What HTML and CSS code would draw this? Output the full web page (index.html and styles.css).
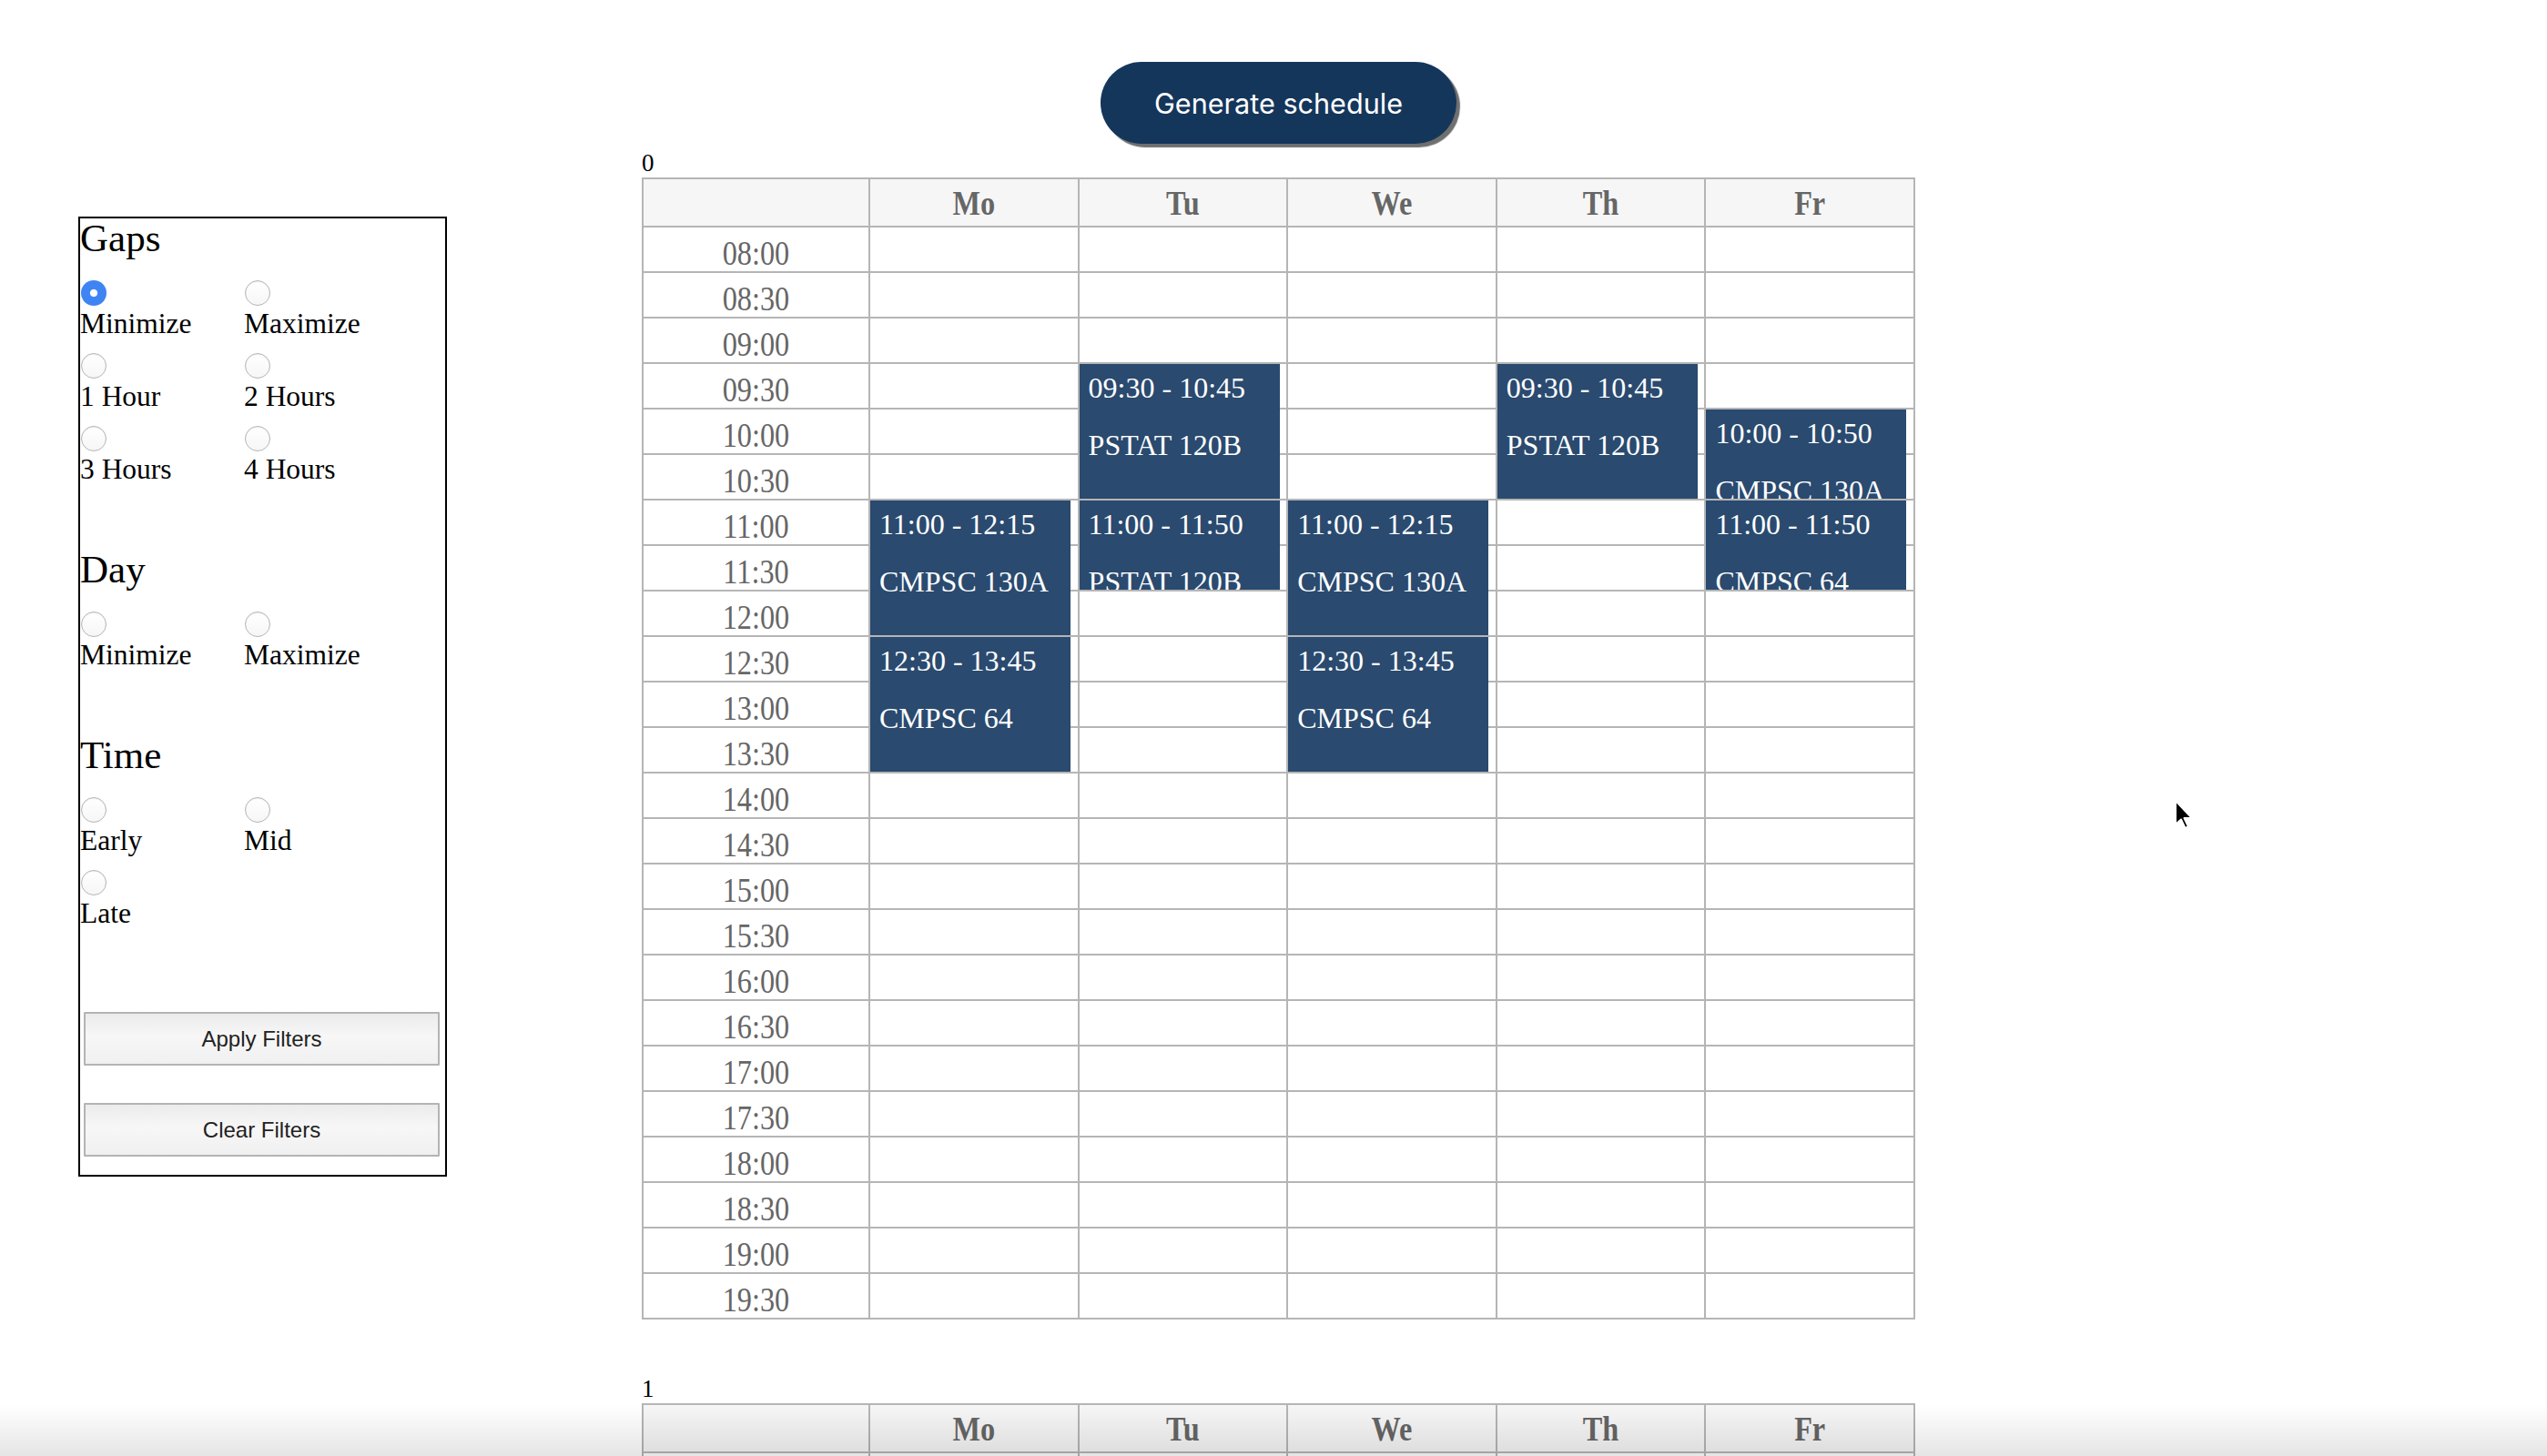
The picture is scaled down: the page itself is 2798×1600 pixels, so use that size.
FILE: index.html
```html
<!DOCTYPE html>
<html lang="en">
<head>
<meta charset="utf-8">
<title>Schedule Generator</title>
<link rel="stylesheet" href="styles.css">
</head>
<body>
<div class="page">
  <aside class="filters">
    <section class="group">
      <h3 class="group-title">Gaps</h3>
      <div class="options">
        <label class="opt"><input type="radio" name="gaps" checked><span>Minimize</span></label>
        <label class="opt"><input type="radio" name="gaps"><span>Maximize</span></label>
        <label class="opt"><input type="radio" name="gaps"><span>1 Hour</span></label>
        <label class="opt"><input type="radio" name="gaps"><span>2 Hours</span></label>
        <label class="opt"><input type="radio" name="gaps"><span>3 Hours</span></label>
        <label class="opt"><input type="radio" name="gaps"><span>4 Hours</span></label>
      </div>
    </section>
    <section class="group">
      <h3 class="group-title">Day</h3>
      <div class="options">
        <label class="opt"><input type="radio" name="day"><span>Minimize</span></label>
        <label class="opt"><input type="radio" name="day"><span>Maximize</span></label>
      </div>
    </section>
    <section class="group">
      <h3 class="group-title">Time</h3>
      <div class="options">
        <label class="opt"><input type="radio" name="time"><span>Early</span></label>
        <label class="opt"><input type="radio" name="time"><span>Mid</span></label>
        <label class="opt"><input type="radio" name="time"><span>Late</span></label>
      </div>
    </section>
    <div class="actions">
      <button class="filter-btn" type="button">Apply Filters</button>
      <button class="filter-btn" type="button">Clear Filters</button>
    </div>
  </aside>

  <main class="main">
    <div class="gen-wrap"><button class="gen-btn" type="button">Generate schedule</button></div>

    <div class="schedule">
      <div class="sched-index">0</div>
      <table class="grid">
        <colgroup><col class="time-col"><col><col><col><col><col></colgroup>
        <thead>
          <tr><th></th><th><span class="lbl">Mo</span></th><th><span class="lbl">Tu</span></th><th><span class="lbl">We</span></th><th><span class="lbl">Th</span></th><th><span class="lbl">Fr</span></th></tr>
        </thead>
        <tbody>
          <tr><td class="time"><span class="lbl">08:00</span></td><td class="slot"></td><td class="slot"></td><td class="slot"></td><td class="slot"></td><td class="slot"></td></tr>
          <tr><td class="time"><span class="lbl">08:30</span></td><td class="slot"></td><td class="slot"></td><td class="slot"></td><td class="slot"></td><td class="slot"></td></tr>
          <tr><td class="time"><span class="lbl">09:00</span></td><td class="slot"></td><td class="slot"></td><td class="slot"></td><td class="slot"></td><td class="slot"></td></tr>
          <tr><td class="time"><span class="lbl">09:30</span></td><td class="slot"></td>
            <td class="slot"><div class="ev" style="height:148px"><div class="ev-time">09:30 - 10:45</div><div class="ev-name">PSTAT 120B</div></div></td>
            <td class="slot"></td>
            <td class="slot"><div class="ev" style="height:148px"><div class="ev-time">09:30 - 10:45</div><div class="ev-name">PSTAT 120B</div></div></td>
            <td class="slot"></td></tr>
          <tr><td class="time"><span class="lbl">10:00</span></td><td class="slot"></td><td class="slot"></td><td class="slot"></td><td class="slot"></td>
            <td class="slot"><div class="ev" style="height:98px"><div class="ev-time">10:00 - 10:50</div><div class="ev-name">CMPSC 130A</div></div></td></tr>
          <tr><td class="time"><span class="lbl">10:30</span></td><td class="slot"></td><td class="slot"></td><td class="slot"></td><td class="slot"></td><td class="slot"></td></tr>
          <tr><td class="time"><span class="lbl">11:00</span></td>
            <td class="slot"><div class="ev" style="height:148px"><div class="ev-time">11:00 - 12:15</div><div class="ev-name">CMPSC 130A</div></div></td>
            <td class="slot"><div class="ev" style="height:98px"><div class="ev-time">11:00 - 11:50</div><div class="ev-name">PSTAT 120B</div></div></td>
            <td class="slot"><div class="ev" style="height:148px"><div class="ev-time">11:00 - 12:15</div><div class="ev-name">CMPSC 130A</div></div></td>
            <td class="slot"></td>
            <td class="slot"><div class="ev" style="height:98px"><div class="ev-time">11:00 - 11:50</div><div class="ev-name">CMPSC 64</div></div></td></tr>
          <tr><td class="time"><span class="lbl">11:30</span></td><td class="slot"></td><td class="slot"></td><td class="slot"></td><td class="slot"></td><td class="slot"></td></tr>
          <tr><td class="time"><span class="lbl">12:00</span></td><td class="slot"></td><td class="slot"></td><td class="slot"></td><td class="slot"></td><td class="slot"></td></tr>
          <tr><td class="time"><span class="lbl">12:30</span></td>
            <td class="slot"><div class="ev" style="height:148px"><div class="ev-time">12:30 - 13:45</div><div class="ev-name">CMPSC 64</div></div></td>
            <td class="slot"></td>
            <td class="slot"><div class="ev" style="height:148px"><div class="ev-time">12:30 - 13:45</div><div class="ev-name">CMPSC 64</div></div></td>
            <td class="slot"></td><td class="slot"></td></tr>
          <tr><td class="time"><span class="lbl">13:00</span></td><td class="slot"></td><td class="slot"></td><td class="slot"></td><td class="slot"></td><td class="slot"></td></tr>
          <tr><td class="time"><span class="lbl">13:30</span></td><td class="slot"></td><td class="slot"></td><td class="slot"></td><td class="slot"></td><td class="slot"></td></tr>
          <tr><td class="time"><span class="lbl">14:00</span></td><td class="slot"></td><td class="slot"></td><td class="slot"></td><td class="slot"></td><td class="slot"></td></tr>
          <tr><td class="time"><span class="lbl">14:30</span></td><td class="slot"></td><td class="slot"></td><td class="slot"></td><td class="slot"></td><td class="slot"></td></tr>
          <tr><td class="time"><span class="lbl">15:00</span></td><td class="slot"></td><td class="slot"></td><td class="slot"></td><td class="slot"></td><td class="slot"></td></tr>
          <tr><td class="time"><span class="lbl">15:30</span></td><td class="slot"></td><td class="slot"></td><td class="slot"></td><td class="slot"></td><td class="slot"></td></tr>
          <tr><td class="time"><span class="lbl">16:00</span></td><td class="slot"></td><td class="slot"></td><td class="slot"></td><td class="slot"></td><td class="slot"></td></tr>
          <tr><td class="time"><span class="lbl">16:30</span></td><td class="slot"></td><td class="slot"></td><td class="slot"></td><td class="slot"></td><td class="slot"></td></tr>
          <tr><td class="time"><span class="lbl">17:00</span></td><td class="slot"></td><td class="slot"></td><td class="slot"></td><td class="slot"></td><td class="slot"></td></tr>
          <tr><td class="time"><span class="lbl">17:30</span></td><td class="slot"></td><td class="slot"></td><td class="slot"></td><td class="slot"></td><td class="slot"></td></tr>
          <tr><td class="time"><span class="lbl">18:00</span></td><td class="slot"></td><td class="slot"></td><td class="slot"></td><td class="slot"></td><td class="slot"></td></tr>
          <tr><td class="time"><span class="lbl">18:30</span></td><td class="slot"></td><td class="slot"></td><td class="slot"></td><td class="slot"></td><td class="slot"></td></tr>
          <tr><td class="time"><span class="lbl">19:00</span></td><td class="slot"></td><td class="slot"></td><td class="slot"></td><td class="slot"></td><td class="slot"></td></tr>
          <tr><td class="time"><span class="lbl">19:30</span></td><td class="slot"></td><td class="slot"></td><td class="slot"></td><td class="slot"></td><td class="slot"></td></tr>
        </tbody>
      </table>
    </div>

    <div class="schedule">
      <div class="sched-index">1</div>
      <table class="grid">
        <colgroup><col class="time-col"><col><col><col><col><col></colgroup>
        <thead>
          <tr><th></th><th><span class="lbl">Mo</span></th><th><span class="lbl">Tu</span></th><th><span class="lbl">We</span></th><th><span class="lbl">Th</span></th><th><span class="lbl">Fr</span></th></tr>
        </thead>
        <tbody>
          <tr><td class="time"><span class="lbl">08:00</span></td><td class="slot"></td><td class="slot"></td><td class="slot"></td><td class="slot"></td><td class="slot"></td></tr>
          <tr><td class="time"><span class="lbl">08:30</span></td><td class="slot"></td><td class="slot"></td><td class="slot"></td><td class="slot"></td><td class="slot"></td></tr>
          <tr><td class="time"><span class="lbl">09:00</span></td><td class="slot"></td><td class="slot"></td><td class="slot"></td><td class="slot"></td><td class="slot"></td></tr>
        </tbody>
      </table>
    </div>
  </main>
</div>

<div class="fade"></div>
<svg class="cursor" width="24" height="36" viewBox="0 0 24 36" aria-hidden="true">
  <path d="M2 2 L2 28 L8 22.5 L12.5 32 L16 30.5 L11.5 21 L20 21 Z" fill="#000" stroke="#fff" stroke-width="2" stroke-linejoin="round"/>
</svg>
</body>
</html>
```

FILE: styles.css
```css
html, body {
  margin: 0;
  padding: 0;
  background: #ffffff;
}

body {
  font-family: "Liberation Serif", "Times New Roman", serif;
  color: #000;
  height: 100vh;
  overflow: hidden;
}

.page {
  display: grid;
  grid-template-columns: 405px 1399px;
  column-gap: 214px;
  padding-left: 86px;
  align-items: start;
}

/* ---------- Filters sidebar ---------- */
.filters {
  margin-top: 238px;
  box-sizing: border-box;
  width: 405px;
  border: 2px solid #000;
  padding: 0 0 20px;
}

.group-title {
  margin: 0;
  font-size: 43px;
  font-weight: 400;
  line-height: 44px;
}

.group + .group {
  margin-top: 72px;
}

.options {
  display: grid;
  grid-template-columns: 180px 180px;
  row-gap: 16px;
  margin-top: 24px;
}

.opt {
  display: flex;
  flex-direction: column;
  align-items: flex-start;
  font-size: 31.5px;
  line-height: 32px;
}

.opt input {
  appearance: none;
  -webkit-appearance: none;
  box-sizing: border-box;
  width: 28px;
  height: 28px;
  margin: 0 0 4px 1px;
  border-radius: 50%;
  border: 1.5px solid #b5b5b5;
  background: linear-gradient(#ffffff, #f6f6f6);
  box-shadow: inset 0 1px 1px rgba(0, 0, 0, 0.07);
}

.opt input:checked {
  border: 0;
  background: radial-gradient(circle, #ffffff 0 3.6px, #3f84f3 4.6px);
  box-shadow: none;
}

.actions {
  margin-top: 92px;
  display: flex;
  flex-direction: column;
  gap: 41px;
  padding-left: 4px;
}

.filter-btn {
  box-sizing: border-box;
  width: 391px;
  height: 59px;
  border: 2px solid #b4b4b4;
  border-radius: 1px;
  background: linear-gradient(#ebebeb, #f7f7f7 45%, #f0f0f0);
  color: #222;
  font-family: "Liberation Sans", Arial, sans-serif;
  font-size: 24px;
  padding: 0;
}

/* ---------- Main ---------- */
.main {
  padding-top: 68px;
}

.gen-wrap {
  display: flex;
  justify-content: center;
  margin-bottom: 6px;
}

.gen-btn {
  width: 391px;
  height: 90px;
  border: 0;
  border-radius: 45px;
  background: #15365b;
  color: #fff;
  font-family: Inter, "Noto Sans", sans-serif;
  font-size: 30.6px;
  font-weight: 400;
  padding: 0;
  box-shadow: 4px 4px 1px #6f6f6f;
}

.sched-index {
  font-size: 27px;
  line-height: 31px;
}

.schedule + .schedule {
  margin-top: 61px;
}

.grid {
  width: 1399px;
  table-layout: fixed;
  border-collapse: collapse;
}

.grid .time-col {
  width: 249px;
}

.grid th,
.grid td {
  border: 2px solid #b5b5b5;
  padding: 0;
}

.grid thead tr {
  height: 53px;
}

.grid th {
  background: #f6f6f6;
  color: #666;
  font-weight: 700;
  font-size: 32.3px;
  line-height: 40px;
  text-align: center;
}

.grid tbody tr {
  height: 50px;
}

.grid td.time {
  color: #666;
  font-size: 32.3px;
  line-height: 40px;
  text-align: center;
  padding-top: 8px;
}

/* the reference renders table labels taller and narrower than plain Times */
.lbl {
  display: inline-block;
  line-height: 40px;
  transform: scaleY(1.18);
}

.grid td.slot {
  position: relative;
}

.ev {
  position: absolute;
  top: 0;
  left: 0;
  z-index: 1;
  box-sizing: border-box;
  width: 220px;
  padding: 9px 10px 0;
  overflow: hidden;
  background: #2a4a6f;
  color: #fff;
  font-size: 32px;
  line-height: 34px;
  white-space: nowrap;
}

.ev-name {
  margin-top: 29px;
}

/* ---------- Overlays ---------- */
.fade {
  position: fixed;
  left: 0;
  right: 0;
  bottom: 0;
  height: 56px;
  background: linear-gradient(rgba(0, 0, 0, 0), rgba(0, 0, 0, 0.1));
  pointer-events: none;
  z-index: 5;
}

.cursor {
  position: fixed;
  left: 2388px;
  top: 878px;
  z-index: 6;
}
```
